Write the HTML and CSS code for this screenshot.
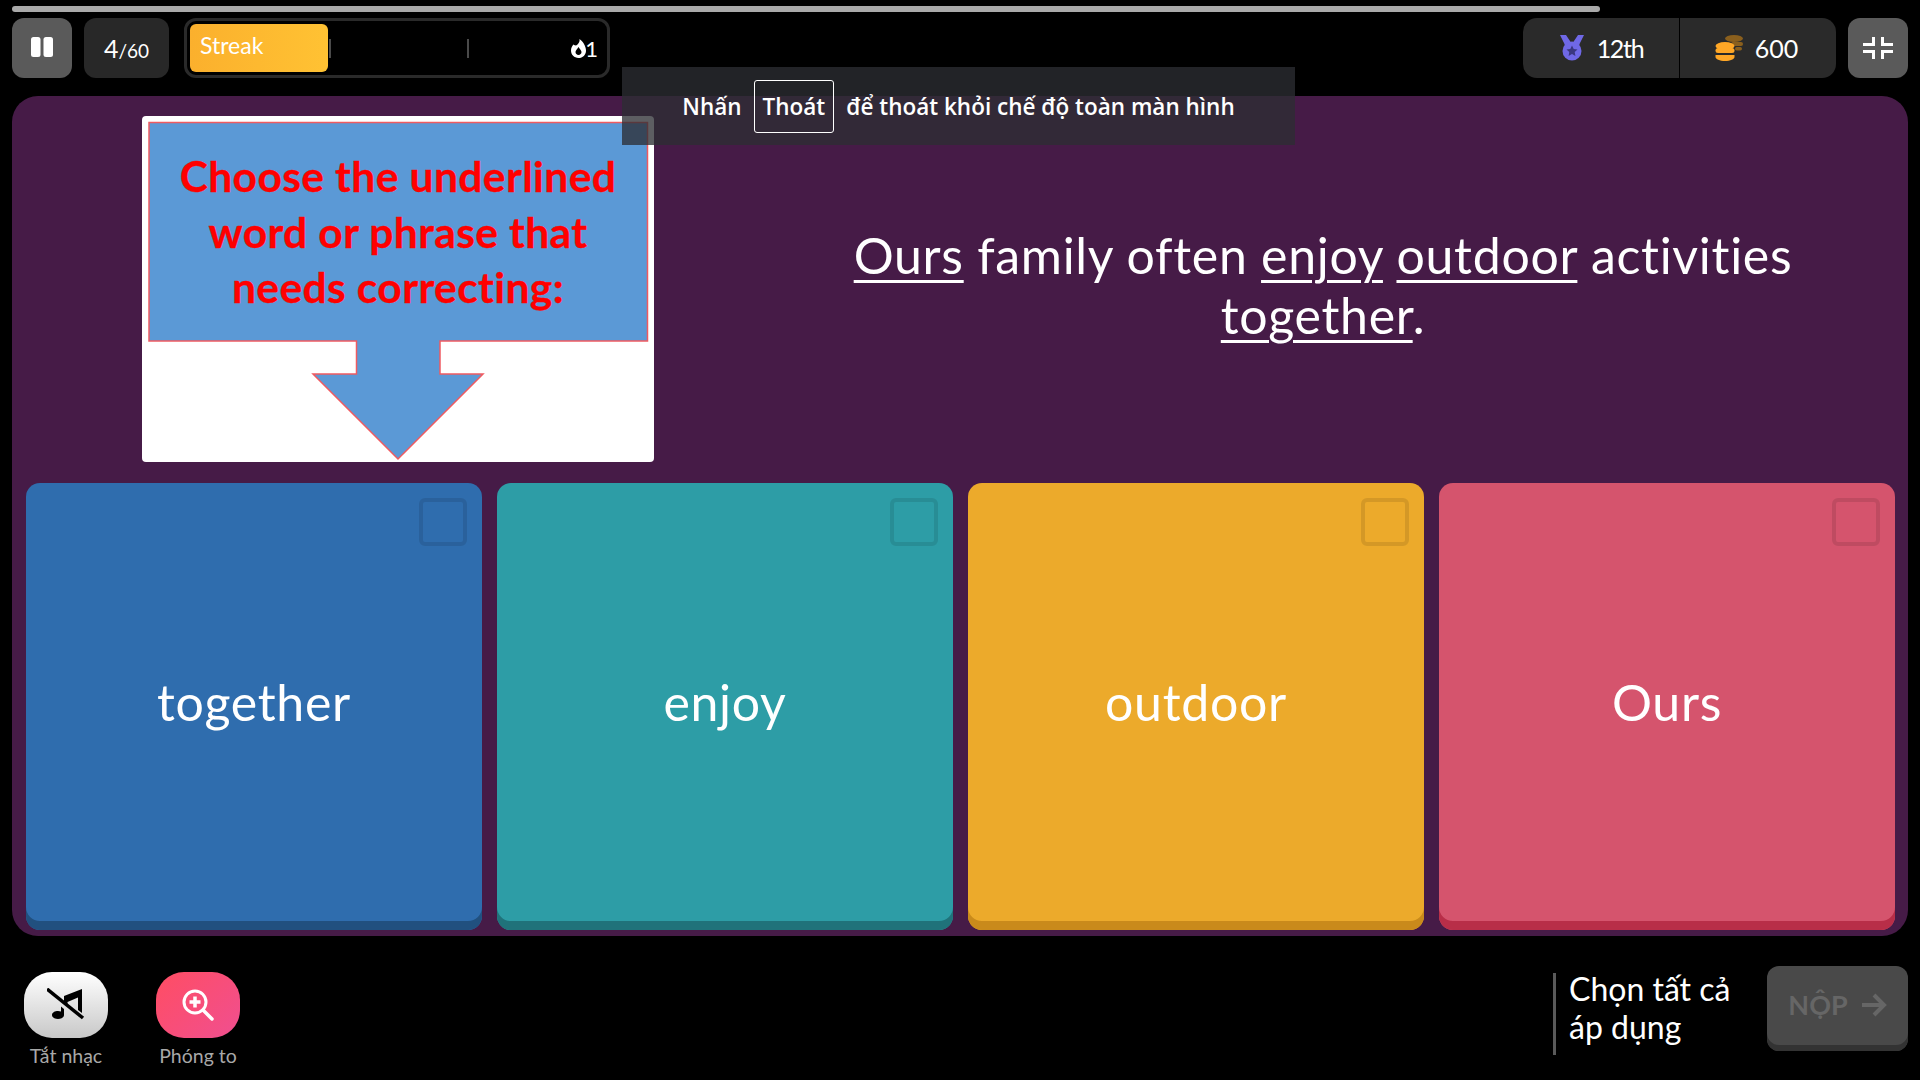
FILE: index.html
```html
<!DOCTYPE html>
<html lang="en">
<head>
  <meta charset="UTF-8">
  <meta name="viewport" content="width=device-width, initial-scale=1.0">
  <title>Quiz</title>
  <link rel="stylesheet" href="styles.css">
</head>
<body>
  <div class="app">
    <div class="progress"></div>

    <header class="topbar">
      <button class="tile tile-light" aria-label="Pause">
        <svg class="pause-icon" width="24" height="24" viewBox="0 0 24 24" fill="#fff"><rect x="1" y="2" width="9.5" height="20" rx="2.5"/><rect x="13.5" y="2" width="9.5" height="20" rx="2.5"/></svg>
      </button>
      <div class="tile count"><span class="count-now">4</span><span class="count-total">/60</span></div>
      <div class="streak">
        <div class="streak-fill">Streak</div>
        <i class="streak-tick"></i>
        <i class="streak-gap"></i>
        <i class="streak-tick"></i>
        <i class="streak-gap"></i>
        <svg class="flame" width="15" height="19" viewBox="0 0 15 19"><path fill="#fff" fill-rule="evenodd" d="M8.500 0c.6 3-1 4.300-2.800 6.300C3.600 6.700 2.500 5.600 2.500 5.600 1 7.300 0 9.300 0 11.600 0 15.700 3.200 19 7.500 19s7.500-3.300 7.500-7.300C15 7 11.500 2 8.500 0zM7.500 16c-1.700 0-3-1.300-3-2.900 0-1.700 1.700-3 3-5.100 1.300 2.100 3 3.400 3 5.100 0 1.600-1.300 2.900-3 2.900z"/></svg>
        <span class="streak-num">1</span>
      </div>

      <div class="stats">
        <div class="stat">
          <svg width="26" height="26" viewBox="0 0 26 26"><path fill="#6f68e6" d="M1 0h6l6 9 6-9h6l-6 12H7z"/><circle cx="13" cy="16" r="9.500" fill="#6f68e6"/><path fill="#3a3780" d="M13 10.500l1.700 3.500 3.800.5-2.800 2.600.7 3.800-3.400-1.800-3.400 1.800.7-3.800-2.800-2.600 3.800-.5z"/></svg>
          <span class="stat-rank">12th</span>
        </div>
        <div class="stat">
          <svg width="28" height="26" viewBox="0 0 28 26">
            <g fill="#8a5f1d"><ellipse cx="19" cy="3.500" rx="9" ry="3.500"/><rect x="16" y="7" width="12" height="4" rx="2"/><rect x="20" y="12" width="7" height="3.500" rx="1.700"/></g>
            <g fill="#ffa726"><ellipse cx="10" cy="11" rx="9.500" ry="4"/><rect x="0.500" y="13" width="19" height="5" rx="2.500"/><path d="M.5 20h19v2c0 2.200-4.200 4-9.500 4S.5 24.200.5 22z"/></g>
          </svg>
          <span>600</span>
        </div>
      </div>
      <button class="tile tile-light" aria-label="Exit fullscreen">
        <svg width="32" height="24" viewBox="0 0 32 24" fill="none" stroke="#fff" stroke-width="3"><path d="M1 8.500h10.500V1M20.500 1v7.500H31M1 15.500h10.500V23M31 15.500H20.500V23"/></svg>
      </button>
    </header>

    <main class="panel">
      <section class="question">
        <svg class="question-image" viewBox="0 0 512 346">
          <polygon class="callout" points="7,6.500 505.500,6.500 505.500,225 298,225 298,258 341,258 256,343 171,258 214.500,258 214.500,225 7,225"/>
          <text class="callout-text" x="256" y="75.500">Choose the underlined</text>
          <text class="callout-text" x="256" y="131.500">word or phrase that</text>
          <text class="callout-text" x="256" y="187">needs correcting:</text>
        </svg>
        <p class="question-text"><u>Ours</u> family often <u>enjoy</u> <u>outdoor</u> activities <u>together</u>.</p>
      </section>

      <section class="options">
        <button class="option option-blue"><i class="check"></i>together</button>
        <button class="option option-teal"><i class="check"></i>enjoy</button>
        <button class="option option-yellow"><i class="check"></i>outdoor</button>
        <button class="option option-red"><i class="check"></i>Ours</button>
      </section>
    </main>

    <footer class="footer">
      <div class="tools">
        <div class="tool">
          <button class="tool-btn tool-music" aria-label="Tắt nhạc">
            <svg width="38" height="34" viewBox="0 0 38 34"><path fill="#000" d="M17 8L35 1v24l-4-3V9.500L20.500 14v4L17 15zM14 18.500l3 2.500v6c0 2.500-3 4-6 4s-6-1.500-6-4 3-4 6-4c1 0 2 .2 3 .6z"/><path stroke="#000" stroke-width="3.500" d="M0 1l36 29"/></svg>
          </button>
          <span class="tool-label">Tắt nhạc</span>
        </div>
        <div class="tool">
          <button class="tool-btn tool-zoom" aria-label="Phóng to">
            <svg width="32" height="32" viewBox="0 0 32 32" fill="none" stroke="#fff"><circle cx="13" cy="13" r="11" stroke-width="3"/><path stroke-width="3.500" d="M13 7.500v11M7.500 13h11"/><path stroke-width="3.500" stroke-linecap="round" d="M21 21l9 9"/></svg>
          </button>
          <span class="tool-label">Phóng to</span>
        </div>
      </div>

      <div class="submit-area">
        <div class="hint"><span class="hint-text">Chọn tất cả<br>áp dụng</span></div>
        <button class="submit">NỘP
          <svg width="26" height="26" viewBox="0 0 26 26" fill="none" stroke="#666" stroke-width="4"><path d="M1 13h22M13 3l10 10-10 10"/></svg>
        </button>
      </div>
    </footer>

    <div class="toast">Nhấn <kbd class="toast-key">Thoát</kbd> để thoát khỏi chế độ toàn màn hình</div>
  </div>
</body>
</html>
```

FILE: styles.css
```css
* {
  box-sizing: border-box;
}
body {
  margin: 0;
  background: #000;
  color: #fff;
  font-family: Lato, "Noto Sans", sans-serif;
}
button {
  border: none;
  padding: 0;
  color: inherit;
  font-family: inherit;
  cursor: pointer;
}
.app {
  position: relative;
  width: 1920px;
  height: 1080px;
  overflow: hidden;
  padding-top: 6px;
}
.progress {
  width: 1588px;
  height: 6px;
  margin-left: 12px;
  background: #a9a9a9;
  border-radius: 3px;
}

/* top bar */
.topbar {
  display: flex;
  align-items: stretch;
  height: 60px;
  margin: 6px 12px 0;
}
.tile {
  display: flex;
  align-items: center;
  justify-content: center;
  width: 60px;
  background: #282828;
  border-radius: 12px;
}
.tile-light {
  background: #5a5a5a;
}
.pause-icon {
  margin-bottom: 2px;
}
.count {
  width: 85px;
  margin-left: 12px;
  align-items: baseline;
  padding-top: 15px;
}
.count-now {
  font-size: 25px;
}
.count-total {
  font-size: 19px;
}
.streak {
  display: flex;
  align-items: center;
  width: 426px;
  margin-left: 15px;
  padding: 3px;
  border: 3px solid #2a2a2a;
  border-radius: 12px;
}
.streak-fill {
  align-self: stretch;
  width: 138px;
  padding: 7px 10px;
  font-size: 23px;
  background: linear-gradient(90deg, #fbb02d, #ffc233);
  border-radius: 6px;
}
.streak-tick {
  width: 2px;
  height: 19px;
  margin-left: 1px;
  background: #4a4a4a;
}
.streak-gap {
  flex: 1;
}
.streak-tick + .streak-gap {
  flex: 0 0 135px;
}
.streak-tick + .streak-gap + .streak-tick + .streak-gap {
  flex: 1;
}
.flame {
  margin-right: -1px;
}
.streak-num {
  font-size: 22px;
  margin-right: 6px;
}
.stats {
  display: flex;
  margin-left: auto;
  width: 313px;
  background: #2a2a2a;
  border-radius: 14px;
}
.stat {
  display: flex;
  align-items: center;
  justify-content: center;
  gap: 12px;
  font-size: 25px;
}
.stat:first-child {
  width: 157px;
  border-right: 1px solid #000;
}
.stat:last-child {
  flex: 1;
  padding-right: 3px;
}
.stat-rank {
  letter-spacing: -1.3px;
}
.stats + .tile {
  margin-left: 12px;
}

/* question panel */
.panel {
  height: 840px;
  margin: 18px 12px 0;
  padding: 20px 13px 5px 14px;
  background: #461b47;
  border-radius: 26px;
}
.question {
  display: flex;
  align-items: center;
  height: 346px;
  margin-bottom: 21px;
}
.question-image {
  flex: none;
  width: 512px;
  height: 346px;
  margin-left: 116px;
  background: #fff;
  border-radius: 4px;
}
.callout {
  fill: #5b99d6;
  stroke: #ef5b61;
  stroke-width: 1.5;
}
.callout-text {
  fill: #f00;
  stroke: #f00;
  stroke-width: 0.3;
  font-family: Lato, sans-serif;
  font-size: 42.5px;
  font-weight: 700;
  letter-spacing: 0.4px;
  text-anchor: middle;
}
.question-text {
  flex: none;
  width: 1000px;
  margin: 0 0 0 169px;
  padding-bottom: 8px;
  font-size: 50px;
  letter-spacing: 0.7px;
  line-height: 60px;
  text-align: center;
}
.question-text u {
  text-decoration-thickness: 3px;
  text-underline-offset: 6px;
}
.options {
  display: grid;
  grid-template-columns: repeat(4, 1fr);
  gap: 15px;
  height: 447px;
}
.option {
  position: relative;
  padding-bottom: 9px;
  font-size: 50px;
  letter-spacing: 0.7px;
  border-radius: 14px;
}
.check {
  position: absolute;
  top: 15px;
  right: 15px;
  width: 48px;
  height: 48px;
  border: 4px solid rgba(0, 0, 0, 0.1);
  border-radius: 6px;
}
.option-blue {
  background: #2f6dae;
  box-shadow: inset 0 -9px 0 #21507f;
}
.option-teal {
  background: #2d9da6;
  box-shadow: inset 0 -9px 0 #20727a;
}
.option-yellow {
  background: #ecaa2b;
  box-shadow: inset 0 -9px 0 #c98a1b;
}
.option-red {
  background: #d5546d;
  box-shadow: inset 0 -9px 0 #b82e48;
}

/* footer */
.footer {
  display: flex;
  justify-content: space-between;
  padding: 30px 12px 0 24px;
}
.tools {
  display: flex;
  gap: 48px;
  padding-top: 6px;
}
.tool {
  display: flex;
  flex-direction: column;
  align-items: center;
  width: 84px;
}
.tool-btn {
  display: flex;
  align-items: center;
  justify-content: center;
  width: 84px;
  height: 66px;
  border-radius: 28px;
}
.tool-music {
  background: linear-gradient(180deg, #fff, #c8c8c8);
}
.tool-zoom {
  background: linear-gradient(135deg, #ff4d63, #f04f90);
}
.tool-label {
  margin-top: 6px;
  font-size: 19.5px;
  color: #a8a8a8;
  white-space: nowrap;
}
.submit-area {
  display: flex;
  align-items: flex-start;
}
.hint {
  width: 214px;
  height: 82px;
  margin-top: 7px;
  padding-left: 13px;
  border-left: 3px solid #5a5a5a;
  font-size: 32px;
  line-height: 38px;
}
.hint-text {
  display: block;
  margin-top: -3px;
}
.submit {
  display: flex;
  align-items: center;
  justify-content: center;
  gap: 13px;
  width: 141px;
  height: 85px;
  padding-bottom: 8px;
  font-size: 27px;
  font-weight: 700;
  color: #666;
  background: #494949;
  border-radius: 12px;
  box-shadow: inset 0 -6px 0 #333;
}

/* fullscreen notice */
.toast {
  position: absolute;
  top: 67px;
  left: 622px;
  display: flex;
  align-items: center;
  justify-content: center;
  gap: 12px;
  width: 673px;
  height: 78px;
  font-family: "Open Sans", sans-serif;
  font-size: 22.5px;
  font-weight: 600;
  background: rgba(44, 46, 51, 0.77);
}
.toast-key {
  padding: 10px 8px;
  font-family: inherit;
  border: 1px solid #fff;
  border-radius: 3px;
}
```
